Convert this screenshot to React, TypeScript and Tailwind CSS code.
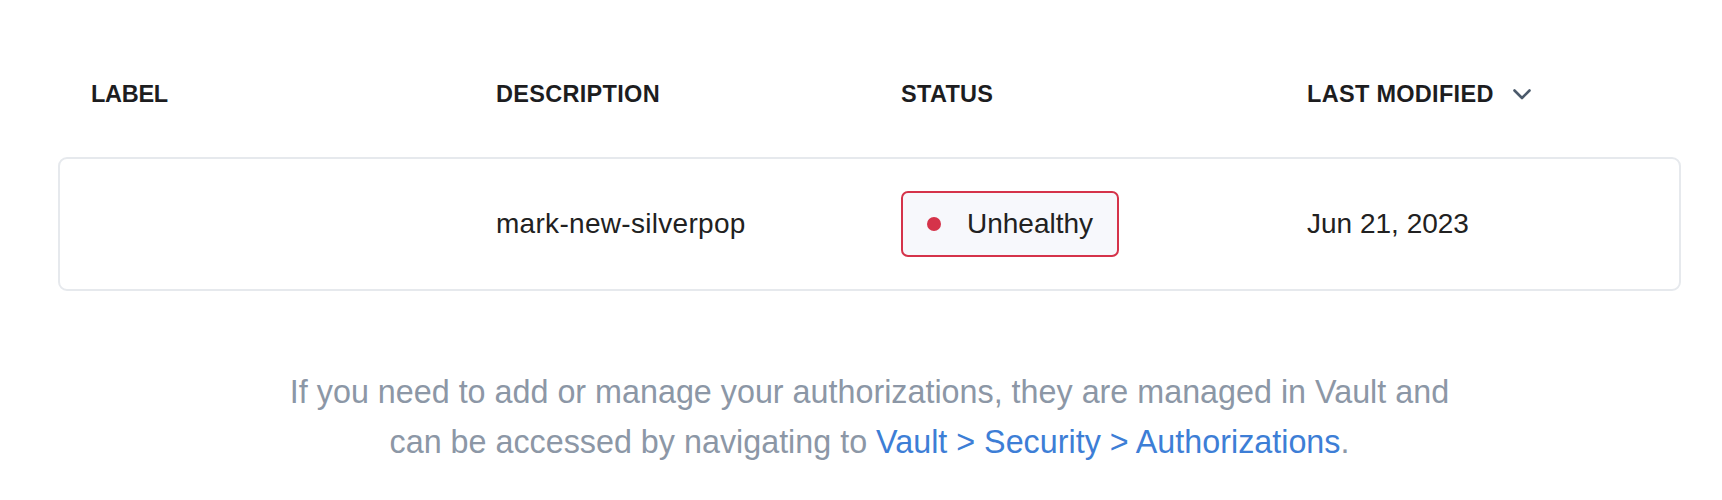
import React from "react";

function Chevron() {
  return (
    <svg width="18" height="11" viewBox="0 0 18 11" fill="none" className="ml-[19px]">
      <polyline points="1.5,1.5 9,9 16.5,1.5" stroke="#4b5a6b" strokeWidth="2.6" strokeLinecap="round" strokeLinejoin="round" />
    </svg>
  );
}

export default function App() {
  return (
    <div className="w-[1722px] h-[500px] bg-white font-['Liberation_Sans',Arial,Helvetica,sans-serif]">
      <div className="ml-[58px] w-[1623px]">
        <div className="grid grid-cols-[405px_405px_406px_1fr] px-[33px] pt-[80px] text-[23.5px] tracking-[0.3px] leading-[28px] font-bold text-[#1d1d1f]">
          <div className="tracking-[-0.3px]">LABEL</div>
          <div>DESCRIPTION</div>
          <div>STATUS</div>
          <div className="flex items-center">
            <span>LAST MODIFIED</span>
            <Chevron />
          </div>
        </div>
        <div className="mt-[49px] h-[134px] rounded-[9px] border-2 border-[#e6e9ed] grid grid-cols-[405px_405px_406px_1fr] items-center px-[31px] text-[28px] leading-[34px] text-[#212121]">
          <div></div>
          <div className="tracking-[0.3px]">mark-new-silverpop</div>
          <div>
            <div className="inline-flex items-center h-[66px] px-[24px] gap-[26px] rounded-[7px] border-2 border-[#d5334a] bg-[#f7f8fc]">
              <span className="w-[14px] h-[14px] rounded-full bg-[#d5334a]"></span>
              <span>Unhealthy</span>
            </div>
          </div>
          <div>Jun 21, 2023</div>
        </div>
        <p className="mt-[76px] mx-auto max-w-[1190px] text-center text-[32.3px] leading-[50px] text-[#8c97a6]">
          If you need to add or manage your authorizations, they are managed in Vault and can be accessed by navigating to{" "}
          <a className="text-[#3d7ed6]">Vault &gt; Security &gt; Authorizations</a>.
        </p>
      </div>
    </div>
  );
}
